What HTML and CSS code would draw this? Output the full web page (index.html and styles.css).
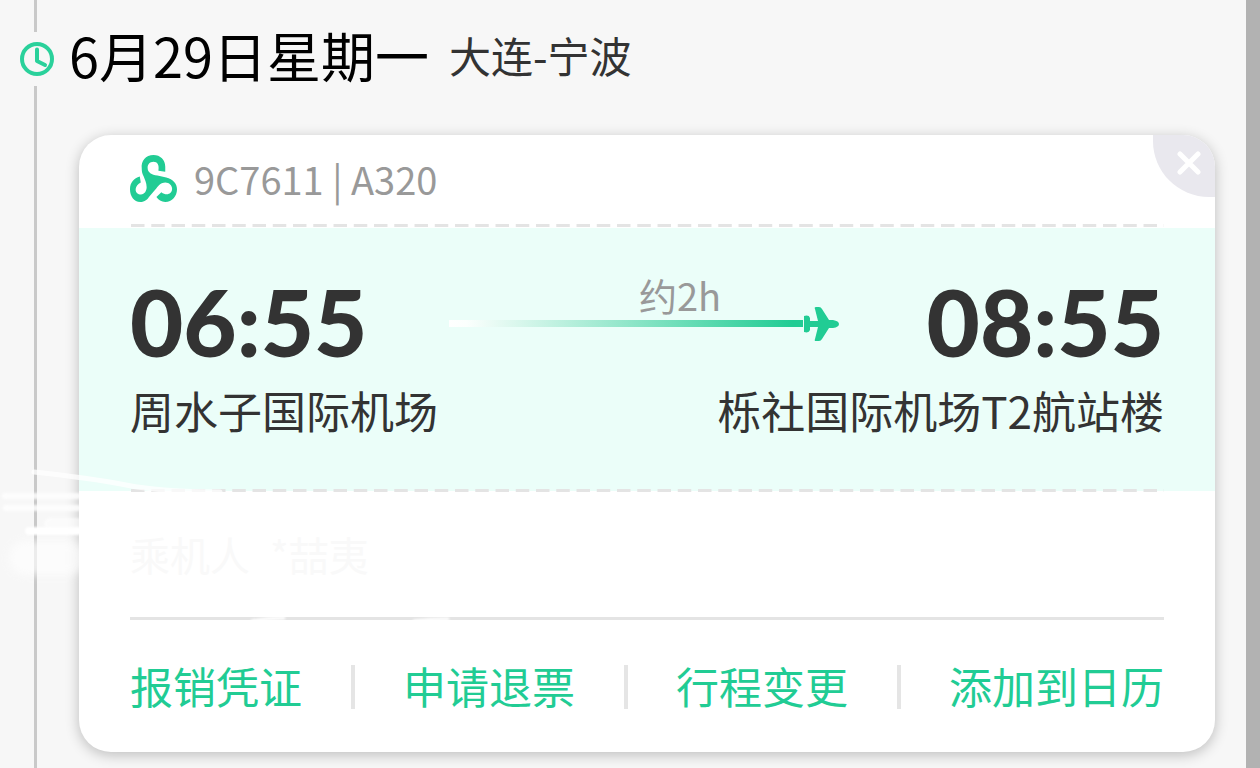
FILE: index.html
```html
<!DOCTYPE html>
<html lang="zh-CN">
<head>
<meta charset="utf-8">
<meta name="viewport" content="width=device-width, initial-scale=1">
<title>行程</title>
<link rel="stylesheet" href="styles.css">
</head>
<body>
<div class="page">
  <div class="rail">
    <span class="rail-line rail-line-top"></span>
    <svg class="clock" viewBox="0 0 34 34" aria-hidden="true">
      <circle cx="17" cy="17" r="15" fill="none" stroke="#2ad19b" stroke-width="4"/>
      <path d="M17 7.500V19L25 23" fill="none" stroke="#2ad19b" stroke-width="4" stroke-linecap="round" stroke-linejoin="round"/>
    </svg>
    <span class="rail-line rail-line-rest"></span>
  </div>
  <main class="trip">
    <header class="trip-head">
      <h1 class="date">6月29日星期一</h1>
      <span class="route">大连-宁波</span>
    </header>
    <article class="card">
      <button class="close" type="button" aria-label="关闭">
        <svg class="close-icon" viewBox="0 0 24 24" aria-hidden="true"><path d="M3 3L21 21M21 3L3 21" stroke="#fff" stroke-width="5" stroke-linecap="round"/></svg>
      </button>
      <div class="flight">
        <svg class="airline" viewBox="0 0 48 48" aria-hidden="true">
          <path fill="#21cc94" d="M12 14C11 6 16 0 24 0C31 0 36 5 36 12V17L29 16C30 10 28 7 24 7C20 7 18 10 18 13C18 18 22 20 28 21L37 23C44 25 48 29 48 35C48 42 43 48 36 48C32 48 29 46 27 43L32 38C37 42 43 40 43 34.500C43 31 40 28 36 28C32 28 29 31 27 34L20 42C18 45 15 48 10.500 48C4 48 0 42 0 35C0 28 4 24 10 22L11 28C5 31 4 38 9 40C14 42 17 37 17 33C17 28 15 25 14 22C12.500 19 12 17 12 14Z"/>
        </svg>
        <span class="flight-no">9C7611 | A320</span>
      </div>
      <div class="dashes"></div>
      <section class="times">
        <div class="row">
          <time class="clock-time">06:55</time>
          <div class="leg">
            <span class="duration">约2h</span>
            <div class="path">
              <span class="track"></span>
              <svg class="plane" viewBox="0 0 36 36" aria-hidden="true">
                <path fill="#21cc94" d="M1 10Q6 8.500 7 12V15H15L12 3Q11 1 13 1H16Q18 1 19 3L26 14H30Q36 15 36 18Q36 21 30 22H26L19 33Q18 35 16 35H13Q11 35 12 33L15 21H7V24Q6 27.500 1 26Z"/>
              </svg>
            </div>
          </div>
          <time class="clock-time">08:55</time>
        </div>
        <div class="row airports">
          <span>周水子国际机场</span>
          <span>栎社国际机场T2航站楼</span>
        </div>
      </section>
      <div class="dashes"></div>
      <div class="passenger"><span>乘机人</span><span>*喆夷</span></div>
      <div class="actions">
        <button class="action" type="button">报销凭证</button>
        <span class="sep"></span>
        <button class="action" type="button">申请退票</button>
        <span class="sep"></span>
        <button class="action" type="button">行程变更</button>
        <span class="sep"></span>
        <button class="action" type="button">添加到日历</button>
      </div>
    </article>
  </main>
  <div class="edge"></div>
  <svg class="strokes" viewBox="0 0 480 170" aria-hidden="true">
    <g fill="none" stroke="#fff" stroke-linecap="round">
      <path d="M34 12Q90 18 126 25T220 32" stroke-width="5" opacity=".75"/>
      <path class="soft" d="M5 36H78M6 48H78" stroke-width="6" opacity=".8"/>
      <path class="soft" d="M29 71H78" stroke-width="8"/>
      <path class="soft" d="M50 64H78" stroke-width="12" opacity=".6"/>
      <path class="softer" d="M26 98H70" stroke-width="34" opacity=".65"/>
      <path class="soft" d="M252 161Q268 158 284 158M414 161Q430 159 448 159" stroke-width="3"/>
    </g>
  </svg>
</div>
</body>
</html>
```
FILE: styles.css
```css
* { box-sizing: border-box; }

body {
  margin: 0;
  background: #f7f7f7;
  color: #333;
  font-family: "Noto Sans CJK SC", sans-serif;
}

button {
  margin: 0;
  padding: 0;
  border: 0;
  background: none;
  font: inherit;
  cursor: pointer;
}

.page {
  position: relative;
  display: flex;
  min-height: 100vh;
}

.rail {
  display: flex;
  flex-direction: column;
  width: 69px;
  padding-left: 20px;
}

.rail-line {
  width: 3px;
  margin-left: 14px;
  background: #c9c9c9;
}

.rail-line-top { height: 32px; }
.rail-line-rest { flex: 1; }

.clock {
  width: 34px;
  height: 34px;
  margin: 10px 0;
}

.trip {
  flex: 1;
  padding-bottom: 16px;
}

.trip-head {
  display: flex;
  align-items: center;
  gap: 20px;
  height: 110px;
}

.date {
  margin: 0;
  color: #000;
  font-size: 54px;
  font-weight: 400;
  line-height: 80px;
}

.route {
  font-size: 42px;
  line-height: 60px;
}

.card {
  position: relative;
  margin: 25px 31px 0 10px;
  overflow: hidden;
  border-radius: 32px;
  background: #fff;
  box-shadow: 0 3px 14px rgba(0, 0, 0, .24);
}

.close {
  position: absolute;
  top: 0;
  right: 0;
  display: flex;
  width: 62px;
  height: 62px;
  padding: 16px 0 0 24px;
  border-radius: 0 0 0 56px;
  background: #e9e8ee;
}

.close-icon {
  width: 24px;
  height: 24px;
}

.flight {
  display: flex;
  align-items: center;
  gap: 17px;
  height: 89px;
  padding: 0 51px 2px;
}

.airline {
  width: 47px;
  height: 47px;
}

.flight-no {
  color: #999;
  font-size: 38px;
  line-height: 56px;
}

.dashes {
  position: relative;
  height: 3px;
  margin: 0 51px 0 52px;
  background: linear-gradient(90deg, #e4e4e4 69%, transparent 69%) 0 0 / calc(100% / 51) 3px;
}

.times {
  height: 263px;
  margin: 1px 0 -2px;
  padding: 42px 51px 0;
  background: #ebfef9;
}

.row {
  display: flex;
  justify-content: space-between;
}

.clock-time {
  font-family: Lato, sans-serif;
  font-size: 92px;
  font-weight: 900;
  line-height: 104px;
}

.leg {
  flex: 1;
  margin: 0 88px 0 82px;
}

.duration {
  display: block;
  padding-left: 72px;
  color: #999;
  font-size: 38px;
  line-height: 50px;
  text-align: center;
}

.path {
  display: flex;
  align-items: center;
  height: 7px;
}

.track {
  flex: 1;
  height: 7px;
  background: linear-gradient(90deg, #fff, #fbfffd 5%, #21cc94 97%);
}

.plane {
  width: 36px;
  height: 36px;
}

.airports {
  font-size: 44px;
  line-height: 72px;
  white-space: nowrap;
}

.passenger {
  display: flex;
  gap: 20px;
  height: 128px;
  margin: 0 51px;
  border-bottom: 3px solid #e4e4e4;
  color: #f9f9f9;
  font-size: 40px;
  line-height: 124px;
}

.actions {
  display: flex;
  align-items: center;
  justify-content: space-between;
  height: 132px;
  padding: 2px 51px 0;
}

.action {
  padding-bottom: 4px;
  color: #21cc94;
  font-size: 43px;
  line-height: 64px;
}

.sep {
  width: 4px;
  height: 44px;
  background: #e5e5e5;
}

.edge {
  width: 14px;
  background: #b2b2b2;
}

.strokes {
  position: absolute;
  top: 460px;
  left: 0;
  width: 480px;
  height: 170px;
  pointer-events: none;
}

.soft { filter: blur(1px); }
.softer { filter: blur(4px); }
```
